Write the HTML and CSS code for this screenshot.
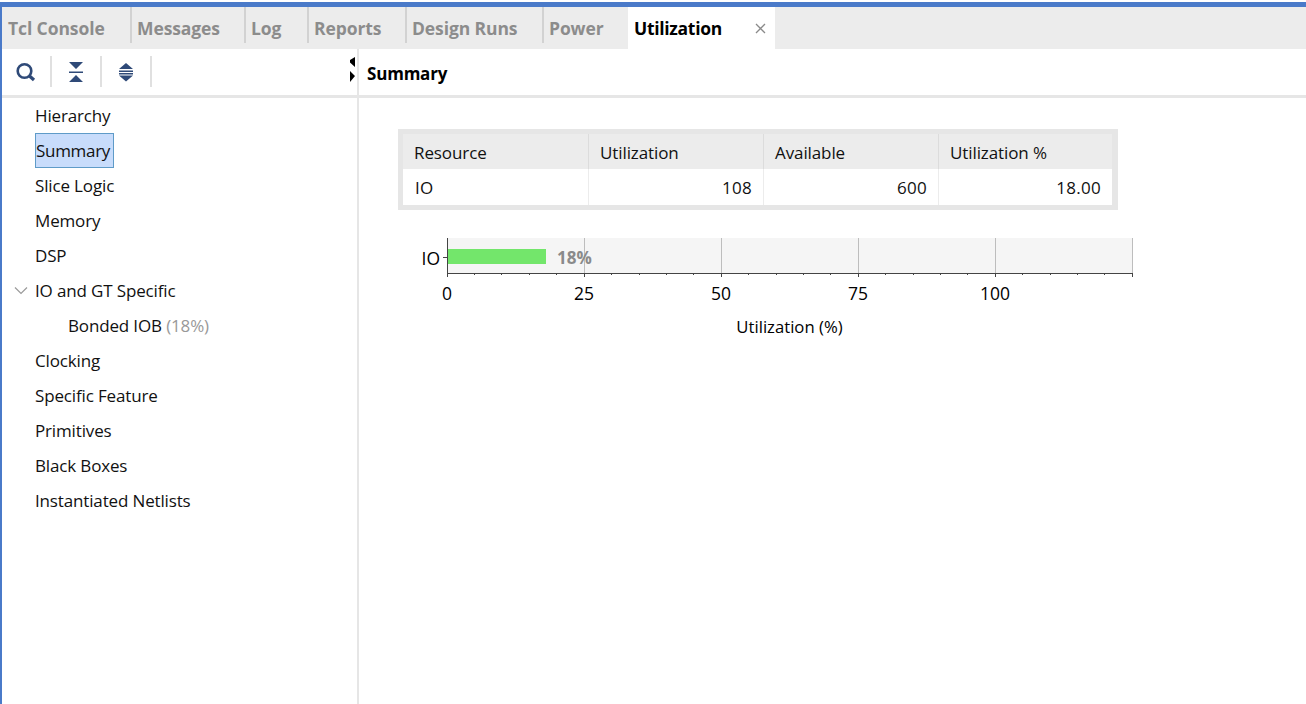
FILE: index.html
```html
<!DOCTYPE html>
<html lang="en">
<head>
<meta charset="utf-8">
<title>Utilization</title>
<link rel="stylesheet" href="styles.css">
</head>
<body>
<div class="window">
  <div class="tabs">
    <div class="tab w1">Tcl Console</div>
    <div class="tab w2">Messages</div>
    <div class="tab w3">Log</div>
    <div class="tab w4">Reports</div>
    <div class="tab w5">Design Runs</div>
    <div class="tab w6">Power</div>
    <div class="tab active"><span>Utilization</span>
      <svg class="close" width="11" height="11" viewBox="0 0 11 11"><path d="M1 1l9 9M10 1l-9 9" stroke="#8a8a8a" stroke-width="1.3" fill="none"/></svg>
    </div>
  </div>
  <div class="body">
    <aside class="side">
      <div class="toolbar">
        <svg class="ic" width="22" height="22" viewBox="-1 0 22 22"><circle cx="9.500" cy="10" r="6.800" fill="none" stroke="#2f4a78" stroke-width="2.6"/><path d="M14.500 15l4.500 4" stroke="#2f4a78" stroke-width="3.200" fill="none"/></svg>
        <i class="sep"></i>
        <svg class="ic" width="20" height="24" viewBox="0 0 20 24"><path d="M3 2h14l-7 7zM3 11.500h14v1.600H3zM10 15l7 7H3z" fill="#2f4a78"/></svg>
        <i class="sep"></i>
        <svg class="ic" width="20" height="24" viewBox="0 0 20 24"><path d="M10 3l7 6H3zM3 10.500h14v1.500H3zM3 13h14v1.500H3zM3 15.500h14l-7 6z" fill="#2f4a78"/></svg>
        <i class="sep"></i>
      </div>
      <ul class="tree">
        <li>Hierarchy</li>
        <li><span class="sel">Summary</span></li>
        <li>Slice Logic</li>
        <li>Memory</li>
        <li>DSP</li>
        <li class="parent"><svg class="chev" width="14" height="9" viewBox="0 0 14 9"><path d="M1 1.500l6 6 6-6" stroke="#9a9a9a" stroke-width="1.200" fill="none"/></svg>IO and GT Specific</li>
        <li class="child">Bonded IOB <span class="pct">(18%)</span></li>
        <li>Clocking</li>
        <li>Specific Feature</li>
        <li>Primitives</li>
        <li>Black Boxes</li>
        <li>Instantiated Netlists</li>
      </ul>
    </aside>
    <main class="main">
      <div class="title">
        <svg class="grip" width="8" height="28" viewBox="0 0 8 28"><path d="M6 1v10L1 6.500V4zM1 15l5 5-5 6z" fill="#000"/></svg>
        <b>Summary</b>
      </div>
      <div class="tablewrap">
        <div class="grid">
          <div class="th">Resource</div><div class="th">Utilization</div><div class="th">Available</div><div class="th">Utilization %</div>
          <div class="td left">IO</div><div class="td">108</div><div class="td">600</div><div class="td">18.00</div>
        </div>
      </div>
      <svg class="chart" width="760" height="110" viewBox="410 230 760 110">
        <rect x="447" y="238" width="685" height="35" fill="#f5f5f5"/>
        <path d="M584.500 238v35M721.500 238v35M858.500 238v35M995.500 238v35M1132.500 238v35" stroke="#bdbdbd" fill="none"/>
        <rect x="447" y="249" width="99" height="15" fill="#73e66b"/>
        <text x="557" y="264" class="barlabel">18%</text>
        <path d="M447.500 238v35M443 257.500h4M447 273.500h685.500" stroke="#444" fill="none"/>
        <path d="M447.500 273v4M584.500 273v4M721.500 273v4M858.500 273v4M995.500 273v4M1132.500 273v4" stroke="#444" fill="none"/>
        <path d="M474.500 273v2M501.500 273v2M529.500 273v2M556.500 273v2M611.500 273v2M639.500 273v2M666.500 273v2M693.500 273v2M748.500 273v2M776.500 273v2M803.500 273v2M830.500 273v2M885.500 273v2M913.500 273v2M940.500 273v2M967.500 273v2M1022.500 273v2M1050.500 273v2M1077.500 273v2M1104.500 273v2" stroke="#444" fill="none"/>
        <text x="440" y="265" text-anchor="end" class="ax">IO</text>
        <text x="447" y="300" text-anchor="middle" class="ax">0</text>
        <text x="584" y="300" text-anchor="middle" class="ax">25</text>
        <text x="721" y="300" text-anchor="middle" class="ax">50</text>
        <text x="858" y="300" text-anchor="middle" class="ax">75</text>
        <text x="995" y="300" text-anchor="middle" class="ax">100</text>
        <text x="789.500" y="333" text-anchor="middle" class="axt">Utilization (%)</text>
      </svg>
    </main>
  </div>
</div>
</body>
</html>
```
FILE: styles.css
```css
* { box-sizing: border-box; }
html, body { margin: 0; height: 100%; overflow: hidden; background: #fff; }
body { font-family: "Open Sans", "Noto Sans", sans-serif; color: #111; }
.window { height: 704px; padding-top: 2px; display: flex; flex-direction: column; background: #fff; }
.tabs { height: 47px; flex: none; display: flex; align-items: stretch; background: #ececec; border-top: 5px solid #4a7ac9; border-left: 2px solid #4a7ac9; }
.tab { font-size: 17.5px; font-weight: 700; color: #8c8c8c; padding: 0 0 0 7px; display: flex; align-items: center; position: relative; letter-spacing: -0.1px; }
.tab::before { content: ""; position: absolute; left: 0; top: 0; bottom: 6px; width: 2px; background: #d2d2d2; }
.tab:first-child::before { display: none; }
.tab:first-child { padding-left: 6px; }
.w1 { width: 128px; }
.w2 { width: 114px; }
.w3 { width: 63px; }
.w4 { width: 98px; }
.w5 { width: 137px; }
.w6 { width: 86px; }
.active { width: 147px; padding-left: 6px; background: #fff; color: #000; font-weight: 700; justify-content: space-between; padding-right: 9px; letter-spacing: -0.3px; }
.active::before { display: none; }
.body { flex: 1; display: flex; min-height: 0; border-left: 2px solid #4a7ac9; }
.side { width: 357px; flex: none; border-right: 2px solid #e6e6e6; }
.toolbar { height: 49px; display: flex; align-items: center; gap: 0; border-bottom: 3px solid #e6e6e6; padding-left: 12px; padding-bottom: 1px; }
.ic { flex: none; }
.sep { width: 2px; height: 31px; background: #e0e0e0; margin: 0 14px; flex: none; }
.tree { list-style: none; margin: 0; padding: 0; font-size: 17px; letter-spacing: -0.15px; }
.tree li { height: 35px; line-height: 35px; padding-left: 33px; position: relative; white-space: nowrap; }
.tree .child { padding-left: 66px; }
.sel { display: inline-block; height: 35px; line-height: 33px; background: #c8dcfb; border: 1px solid #5f9bc8; padding: 0; width: 79px; letter-spacing: -0.3px; }
.pct { color: #999; }
.chev { position: absolute; left: 12px; top: 13px; }
.main { flex: 1; min-width: 0; }
.title { height: 49px; border-bottom: 3px solid #e6e6e6; display: flex; align-items: center; font-size: 17px; padding-top: 2px; position: relative; }
.title b { margin-left: 8px; font-weight: 700; color: #000; letter-spacing: -0.2px; }
.grip { position: absolute; left: -10px; top: 7px; }
.tablewrap { margin: 31px 0 0 39px; width: 720px; border: 5px solid #e6e6e6; border-right-width: 6px; }
.grid { display: grid; grid-template-columns: 186px 175px 175px 173px; font-size: 17px; letter-spacing: -0.1px; background: #fff; }
.th { height: 35px; line-height: 37px; background: #ececec; padding-left: 11px; border-right: 1px solid #dcdcdc; }
.td { height: 36px; line-height: 38px; text-align: right; padding-right: 11px; border-right: 1px solid #ececec; letter-spacing: 0.3px; }
.td.left { text-align: left; padding-left: 12px; }
.th:nth-child(4), .td:nth-child(8) { border-right: none; }
.chart { display: block; margin: 20px 0 0 51px; }
.ax { font: 400 17.5px "Open Sans", sans-serif; fill: #000; }
.axt { font: 500 16.7px "Open Sans", sans-serif; fill: #000; }
.barlabel { font: 700 17px "Open Sans", sans-serif; fill: #8a8a8a; }
```
